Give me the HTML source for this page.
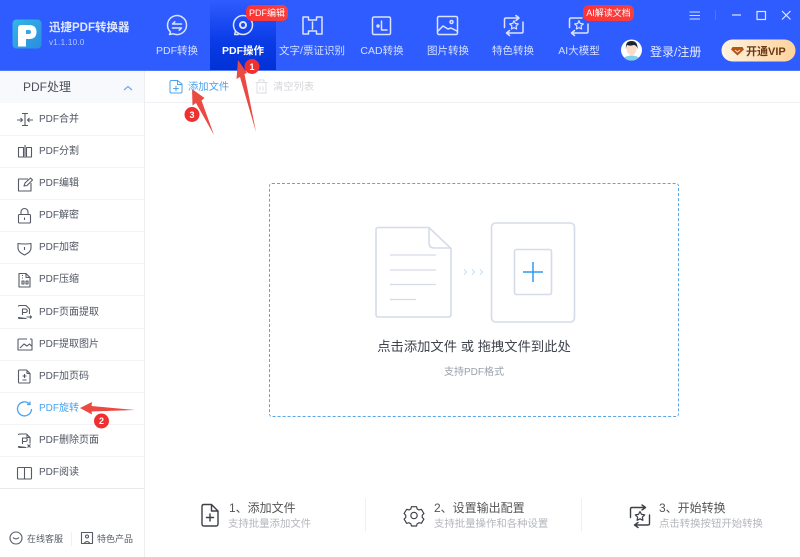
<!DOCTYPE html>
<html lang="zh"><head><meta charset="utf-8"><style>
html,body{margin:0;padding:0}
body{width:800px;height:557px;overflow:hidden;position:relative;background:#fff;font-family:"Liberation Sans","Noto Sans CJK SC",sans-serif;color:#333}
.t{position:absolute;white-space:nowrap;line-height:14px}
.c{transform:translateX(-50%);text-align:center}
svg{position:absolute;left:0;top:0;overflow:visible}
.n{font-size:10.500px;color:#d5e0ff;top:43.500px}
.s{font-size:10px;color:#4f5562;left:39px}
.row{position:absolute;left:0;width:144px;height:1px;background:#f2f3f6}
.b{font-size:9px;color:#fff;background:linear-gradient(90deg,#f33,#f54040);border-radius:6px;height:16px;line-height:16px;text-align:center;position:absolute}
</style></head><body>
<div style="position:absolute;left:0;top:0;width:800px;height:71px;background:#2f5cff;border-bottom:1px solid #4f79ff;box-sizing:border-box"></div>
<div style="position:absolute;left:210px;top:0;width:66px;height:70px;background:linear-gradient(180deg,#2f5cff 0,#0a3be6 60%,#0032d6 100%)"></div>
<div style="position:absolute;left:0;top:71px;width:144px;height:32px;background:#f7f9fd"></div>
<div style="position:absolute;left:144px;top:71px;width:1px;height:486px;background:#eceef2"></div>
<div style="position:absolute;left:145px;top:102px;width:655px;height:1px;background:#eff0f3"></div>
<div class="row" style="top:135px"></div><div class="row" style="top:167px"></div><div class="row" style="top:199px"></div><div class="row" style="top:231px"></div><div class="row" style="top:263px"></div><div class="row" style="top:295px"></div><div class="row" style="top:328px"></div><div class="row" style="top:360px"></div><div class="row" style="top:392px"></div><div class="row" style="top:424px"></div><div class="row" style="top:456px"></div><div class="row" style="top:488px;background:#e8e9ed"></div>
<div style="position:absolute;left:269px;top:183px;width:408px;height:232px;border:1px dashed #5aa5e8;border-radius:3px"></div>
<div style="position:absolute;left:365px;top:498px;width:1px;height:34px;background:#eef0f3"></div>
<div style="position:absolute;left:581px;top:498px;width:1px;height:34px;background:#eef0f3"></div>
<div style="position:absolute;left:71px;top:532px;width:1px;height:14px;background:#eef0f3"></div>

<svg width="800" height="557" viewBox="0 0 800 557" fill="none">
<defs><linearGradient id="lg" x1="0" y1="0" x2="1" y2="1"><stop offset="0" stop-color="#35b6e6"/><stop offset="1" stop-color="#2a8de0"/></linearGradient><linearGradient id="vg" x1="0" x2="1"><stop offset="0" stop-color="#fff3e2"/><stop offset="1" stop-color="#ffd29a"/></linearGradient></defs>
<!-- logo -->
<rect x="12.500" y="19.500" width="29" height="29" rx="4" fill="url(#lg)"/>
<path d="M18 46.500V28Q18 25 21 25H29Q36.500 25 36.500 32Q36.500 39 29 39H26V46.500Z" fill="#fff"/>
<path d="M26 30H29Q31 30 31 32Q31 34 29 34H26Z" fill="#35a8e6"/>
<!-- nav icons -->
<g stroke="#dbe4ff" stroke-width="1.500" stroke-linecap="round" stroke-linejoin="round">
<path d="M170.500 32A9.500 9.500 0 1 1 173 33.700L169.500 34.500Z"/><path d="M172.500 24H181.500M174.800 21.800L172.500 24M172.500 28H181.500M179.200 30.200L181.500 28"/>
<circle cx="243" cy="25" r="9.500"/><circle cx="243" cy="25" r="3" stroke-width="2"/><path d="M235.500 31l-.8 3.500h3.500"/>
<path d="M303 17h5.500v3h8v-3h5.500v17h-5.500v-3h-8v3H303z"/><path d="M312.500 22v7"/>
<rect x="372.500" y="17" width="18" height="17.500" rx="1.500"/><path d="M381.500 21v9H387"/><circle cx="378" cy="26" r="1"/>
<rect x="437.500" y="16.500" width="20" height="18" rx="1.500"/><path d="M438 31l5-5 5 3 3-1 6 3"/><circle cx="451.500" cy="22" r="1.500"/>
<path d="M518 18h-12q-1.500 0-1.500 1.500v8M516 15.500l3 2.500-3 2.500M507 33h14.500q1.500 0 1.500-1.500V22M509.500 30.500l-3 2.500 3 2.500"/><path d="M514 20.800l1.300 2.700 3 .4-2.200 2.100.5 3-2.600-1.400-2.600 1.400.5-3-2.200-2.100 3-.4z" stroke-width="1.200"/>
<path d="M572 33h14.500q1.500 0 1.500-1.500V24M574.500 30.500l-3 2.500 3 2.500M582 18h-11q-1.500 0-1.500 1.500v8"/><path d="M579 20.800l1.300 2.700 3 .4-2.200 2.100.5 3-2.600-1.400-2.600 1.400.5-3-2.200-2.100 3-.4z" stroke-width="1.200"/>
</g>
<!-- window -->
<path d="M689.500 12H700M689.500 15.500H700M689.500 19H700" stroke="#cfdbff" stroke-width="1"/>
<path d="M715.500 10v10" stroke="#4a74ff"/>
<path d="M732 15h9" stroke="#dfe7ff" stroke-width="1.200"/>
<rect x="757" y="11.500" width="8.500" height="8" stroke="#dfe7ff" stroke-width="1.200"/>
<path d="M782 11l8.500 8.500M790.500 11L782 19.500" stroke="#dfe7ff" stroke-width="1.200"/>
<!-- avatar -->
<circle cx="631.500" cy="50" r="10.500" fill="#fff"/>
<path d="M624 57.500q7.500-4 15 0a10.500 10.500 0 0 1-15 0z" fill="#7fd0e6"/>
<ellipse cx="631.500" cy="49" rx="5" ry="6" fill="#fbdcc9"/>
<path d="M626 49q-1-8 5.500-8t6 8q-1-4-4-4-3 1.200-6.500 0-1 2-1 4z" fill="#1c2433"/>
<!-- vip -->
<rect x="721.500" y="39.500" width="74" height="22" rx="11" fill="url(#vg)"/>
<path d="M732.500 47h10l1.500 2.500-6.500 6-6.500-6z" fill="#b4561a"/><path d="M735 50l2.500 2 2.500-2" stroke="#ffe3c0"/>
<!-- sidebar chevron -->
<path d="M124 90l4-3.500 4 3.500" stroke="#69a7ee" stroke-width="1.200"/>
<!-- toolbar -->
<path d="M177.500 80.500h-6q-1.500 0-1.500 1.500v9.500q0 1.500 1.500 1.500h9q1.500 0 1.500-1.500v-7.500z M177.500 80.500v4h4.500M173.200 88.500h5.500M176 85.800v5.400" stroke="#4ba3ee" stroke-width="1"/>
<path d="M255.500 82.500h12M259 82v-2h5v2M257 83v10h9V83M260 86.500v4M263 86.500v4" stroke="#dcdee3" stroke-width="1"/>
<!-- side icons -->
<g stroke="#555b66" stroke-width="1.100" stroke-linejoin="round">
<path d="M22 113.500h6M25 113.500v12M22 125.500h6M17 120h5M20.500 118l2 2-2 2M33 120h-5M29.500 118l-2 2 2 2"/>
<path d="M18.500 147.500h5v9.500h-5zM31.500 147.500h-5v9.500h5zM25 145v13"/>
<path d="M28 179h-9.500v12h12.500v-8M24 186l1-3 5.500-5 2 2-5.500 5.500z"/>
<rect x="18.500" y="214.500" width="12" height="8.500" rx="1"/><path d="M21 214.500v-2.500a3.500 3.500 0 0 1 7 0v2.500M24.500 217.500v2.500"/>
<path d="M18 243.500q6.500 1 13 0v4.500q0 4-6.500 7-6.500-3-6.500-7zM24.500 247v3"/>
<path d="M19 273.500h7l4 4v9.500h-11zM26 274v3.500h4M22 275.500h1M22 278h1M22 281h2v3h-2zM26 281h2v3h-2z"/>
<path d="M18.500 306.500q0-1 1-1h6.500l3.500 3.500v5M26 318.500h-6.500q-1 0-1-1zM22.500 315v-6h3a1.500 1.500 0 0 1 0 3.500h-3M26.500 317h5M30 315.500l1.500 1.500-1.500 1.500"/>
<path d="M20 339h7M30 339h1q1 0 1 1v10H18v-10q0-1 1-1h1M20 348l4-4 3 2 2.500-2 2 2"/>
<path d="M18.500 371q0-1 1-1h7l3.500 3.500v8.500q0 1-1 1h-9.500q-1 0-1-1zM27 370.500v3h3M24.500 374v4M22.500 376h4M22.500 380h4"/>
<path d="M18.500 435q0-1 1-1h7l3.500 3.500v6M26 447.500h-6.500q-1 0-1-1zM27 434.500v3h3M22.500 444v-6h3a1.500 1.500 0 0 1 0 3.500h-3M27.500 444.500l3 3M30.500 444.500l-3 3"/>
<rect x="17.500" y="467.500" width="14" height="11.500" rx="1"/><path d="M24.500 467.500V479"/>
<circle cx="16" cy="538" r="6"/><path d="M13 537.500q3 3 6 0"/>
<path d="M81.500 532.500h11v11h-11zM84 543.500q3-4 6 0"/><circle cx="87" cy="536.500" r="1.500"/>
</g>
<path d="M29.500 404A7 7 0 1 0 31.500 409" stroke="#4ba3ee" stroke-width="1.300"/><path d="M30 401.500v3h-3" stroke="#4ba3ee" stroke-width="1.200"/>
<!-- centre graphic -->
<g stroke="#d6dbe9" stroke-width="1.600">
<path d="M379 227.500h50l22 21v66q0 2.500-2.500 2.500h-70q-2.500 0-2.500-2.500v-85q0-2 3-2z" fill="#fff"/>
<path d="M429 227.500v15q0 5.500 5 5.500h17"/>
<path d="M390 255h46M390 270h46M390 284.500h46M390 299.500h26" stroke-width="1.300"/>
<rect x="491.500" y="223" width="83" height="99" rx="4"/>
<rect x="514.500" y="249.500" width="37" height="45" rx="2"/>
</g>
<path d="M533 262v20M523 272h20" stroke="#2e9bf0" stroke-width="1.500"/>
<path d="M464 269.500l2.500 2.500-2.500 2.500M472 269.500l2.500 2.500-2.500 2.500M480 269.500l2.500 2.500-2.500 2.500" stroke="#bfe0fb" stroke-width="1"/>
<!-- steps -->
<g stroke="#3d4047" stroke-width="1.400" stroke-linejoin="round" stroke-linecap="round">
<path d="M202 506.500q0-2 2-2h7.500l6.500 6.500v13q0 2-2 2h-12q-2 0-2-2zM211.500 505v6h6M206.500 517.500h7M210 514v7"/>
<g transform="translate(414 515.500) scale(.84) translate(-414.500 -516)"><path d="M411.500 505.500h6l.8 2.700 2.200 1.200 2.800-.7 3 5-2 2v2.600l2 2-3 5-2.800-.7-2.200 1.200-.8 2.700h-6l-.8-2.700-2.200-1.200-2.800.7-3-5 2-2v-2.600l-2-2 3-5 2.800.7 2.200-1.200z"/><circle cx="414.500" cy="516" r="3.800"/></g>
<path d="M644 507.500h-12q-1.500 0-1.500 1.500v8.500M642 505l3.500 2.500-3.500 2.500M635 525h13q1.500 0 1.500-1.500V515M638 522.500L634.500 525l3.500 2.500"/>
<path d="M640 511.500l1.500 2.900 3.200.5-2.300 2.200.5 3.200-2.900-1.500-2.900 1.500.5-3.200-2.300-2.200 3.200-.5z" stroke-width="1.200"/>
</g>
<!-- arrows -->
<g fill="#ea4a42">
<path d="M238 60L247 73L244.500 74L256 132L240 77L236.500 79Z"/>
<path d="M192 89L204.500 98L201.500 100.500L214 135L196 103L192.500 105.500Z"/>
<path d="M80 408L92 402L91.500 406L135 410L91.500 411.500L92 414.500Z"/>
<g fill="#f03030"><circle cx="252" cy="66.500" r="7.500"/><circle cx="192" cy="114.500" r="7.500"/><circle cx="101.500" cy="421" r="7.500"/></g>
</g>
</svg>

<span class="t" style="left:49px;top:21px;font-size:11.500px;font-weight:700;color:#dfe7ff">迅捷PDF转换器</span>
<span class="t" style="left:49px;top:36px;font-size:8px;color:#b9c9ff;letter-spacing:.3px">v1.1.10.0</span>
<span class="t c n" style="left:177px">PDF转换</span>
<span class="t c n" style="left:243px;color:#fff;font-weight:700">PDF操作</span>
<span class="t c n" style="left:312px">文字/票证识别</span>
<span class="t c n" style="left:382px">CAD转换</span>
<span class="t c n" style="left:448px">图片转换</span>
<span class="t c n" style="left:513px">特色转换</span>
<span class="t c n" style="left:579px">AI大模型</span>
<div class="b" style="left:246px;top:5px;width:42px">PDF编辑</div>
<div class="b" style="left:583px;top:5px;width:51px">AI解读文档</div>
<span class="t" style="left:650px;top:45px;font-size:12px;color:#e8eeff">登录/注册</span>
<span class="t" style="left:746px;top:45px;font-size:11px;font-weight:700;color:#6b3a16">开通VIP</span>

<span class="t" style="left:23px;top:80px;font-size:12px;color:#4a4f5a">PDF处理</span>
<span class="t" style="left:188px;top:81px;font-size:10.300px;color:#4ba3ee">添加文件</span>
<span class="t" style="left:273px;top:81px;font-size:10.300px;color:#d4d6db">清空列表</span>

<span class="t s" style="top:113px">PDF合并</span>
<span class="t s" style="top:145px">PDF分割</span>
<span class="t s" style="top:177px">PDF编辑</span>
<span class="t s" style="top:209px">PDF解密</span>
<span class="t s" style="top:241px">PDF加密</span>
<span class="t s" style="top:273px">PDF压缩</span>
<span class="t s" style="top:306px">PDF页面提取</span>
<span class="t s" style="top:338px">PDF提取图片</span>
<span class="t s" style="top:370px">PDF加页码</span>
<span class="t s" style="top:402px;color:#4ba3ee">PDF旋转</span>
<span class="t s" style="top:434px">PDF删除页面</span>
<span class="t s" style="top:466px">PDF阅读</span>
<span class="t" style="left:27px;top:532px;font-size:9px;color:#555b66">在线客服</span>
<span class="t" style="left:97px;top:532px;font-size:9px;color:#555b66">特色产品</span>
<span class="t c" style="left:474px;top:340px;font-size:13.300px;color:#3f444e">点击添加文件 或 拖拽文件到此处</span>
<span class="t c" style="left:474px;top:366px;font-size:10px;color:#9aa0ac">支持PDF格式</span>
<span class="t" style="left:229px;top:501px;font-size:12px;color:#555">1、添加文件</span>
<span class="t" style="left:228px;top:518px;font-size:10.400px;color:#b4b7bd">支持批量添加文件</span>
<span class="t" style="left:434px;top:501px;font-size:12px;color:#555">2、设置输出配置</span>
<span class="t" style="left:434px;top:518px;font-size:10.400px;color:#b4b7bd">支持批量操作和各种设置</span>
<span class="t" style="left:659px;top:501px;font-size:12px;color:#555">3、开始转换</span>
<span class="t" style="left:659px;top:518px;font-size:10.400px;color:#b4b7bd">点击转换按钮开始转换</span>
<span class="t c" style="left:252px;top:59.500px;font-size:9px;font-weight:700;color:#fff">1</span>
<span class="t c" style="left:192px;top:107.500px;font-size:9px;font-weight:700;color:#fff">3</span>
<span class="t c" style="left:101.500px;top:414px;font-size:9px;font-weight:700;color:#fff">2</span>
</body></html>
